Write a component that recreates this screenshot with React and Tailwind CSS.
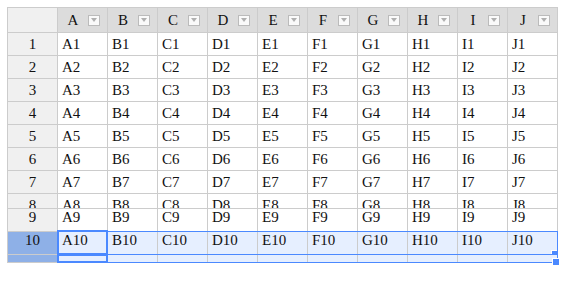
import React from 'react';

const COLS = ['A', 'B', 'C', 'D', 'E', 'F', 'G', 'H', 'I', 'J'];

const DropButton = () => (
  <span className="w-[12px] h-[11px] border border-[#bbb] bg-[#fafafa] flex items-center justify-center">
    <svg width="6" height="4" viewBox="0 0 6 4">
      <polygon points="0,0 6,0 3,4" fill="#b0b0b0" />
    </svg>
  </span>
);

const HeaderRow = () => (
  <div className="flex h-[25px]">
    <div className="w-[50px] shrink-0 bg-[#f0f0f0] border-r border-b border-[#ccc]" />
    {COLS.map((c) => (
      <div
        key={c}
        className="w-[50px] shrink-0 bg-[#dcdcdc] border-r border-b border-[#ccc] flex items-center"
      >
        <span className="w-[30px] text-center leading-[22px]">{c}</span>
        <DropButton />
      </div>
    ))}
  </div>
);

// plain body row, 22px content + 1px border
const BodyRow = ({ n, lifted }) => (
  <div className="flex h-[23px]">
    <div
      className={`w-[50px] shrink-0 bg-[#f0f0f0] border-r border-b border-[#ccc] flex items-center justify-center ${
        lifted ? 'pb-[6px]' : ''
      }`}
    >
      {n}
    </div>
    {COLS.map((c) => (
      <div
        key={c}
        className={`w-[50px] shrink-0 bg-white border-r border-b border-[#ccc] flex items-center pl-[4px] ${
          lifted ? 'pb-[6px]' : ''
        }`}
      >
        {c + n}
      </div>
    ))}
  </div>
);

export default function App() {
  const rows = [1, 2, 3, 4, 5, 6, 7];

  return (
    <div className="relative w-[588px] h-[288px] bg-white text-[15px] text-[#111] font-['Liberation_Serif','DejaVu_Serif',serif]">
      <div className="absolute left-[7px] top-[7px] w-[551px] border-l border-t border-[#ccc]">
        <HeaderRow />
        {rows.map((n) => (
          <BodyRow key={n} n={n} />
        ))}

        {/* row 8, partly covered by the bottom rows */}
        <div className="h-[15px] overflow-hidden border-b border-[#ccc]">
          <div className="flex h-[22px]">
            <div className="w-[50px] shrink-0 bg-[#f0f0f0] border-r border-[#ccc] flex items-center justify-center">
              8
            </div>
            {COLS.map((c) => (
              <div
                key={c}
                className="w-[50px] shrink-0 border-r border-[#ccc] flex items-center pl-[4px]"
              >
                {c + '8'}
              </div>
            ))}
          </div>
        </div>

        <BodyRow n={9} lifted />

        {/* row 10, selected */}
        <div className="flex h-[23px]">
          <div className="w-[50px] shrink-0 bg-[#8eb0e7] border-r border-b border-[#ccc] flex items-center justify-center pb-[6px]">
            10
          </div>
          {COLS.map((c) => (
            <div
              key={c}
              className="w-[50px] shrink-0 bg-[#e6efff] border-r border-b border-[#ccc] flex items-center pl-[4px] pb-[6px]"
            >
              {c + '10'}
            </div>
          ))}
        </div>

        {/* leftover strip */}
        <div className="flex h-[8px]">
          <div className="w-[50px] shrink-0 bg-[#8eb0e7] border-r border-b border-[#ccc]" />
          {COLS.map((c) => (
            <div key={c} className="w-[50px] shrink-0 bg-[#e6efff] border-r border-b border-[#ccc]" />
          ))}
        </div>
      </div>

      {/* selection borders */}
      <div className="absolute left-[57px] top-[231px] w-[501px] h-[24px] border border-[#4b89ff]" />
      <div className="absolute left-[57px] top-[230px] w-[51px] h-[25px] border-2 border-[#4b89ff]" />
      <div className="absolute left-[57px] top-[254px] w-[501px] h-[9px] border border-[#4b89ff]" />
      <div className="absolute left-[57px] top-[254px] w-[51px] h-[9px] border-2 border-[#4b89ff]" />

      {/* fill handles */}
      <div className="absolute left-[551px] top-[250px] w-[6px] h-[4px] bg-[#4b89ff] border-t border-l border-white" />
      <div className="absolute left-[552px] top-[258px] w-[8px] h-[8px] bg-[#4b89ff] border border-white" />
    </div>
  );
}
